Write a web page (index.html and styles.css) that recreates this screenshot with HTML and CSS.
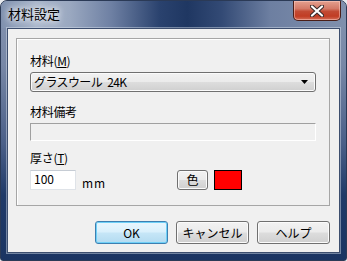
FILE: index.html
```html
<!DOCTYPE html>
<html lang="ja">
<head>
    <meta charset="UTF-8">
    <title>材料設定</title>
    <link rel="stylesheet" href="styles.css">
</head>
<body>
    <div class="window">
        <div class="titlebar">
            <span class="title">材料設定</span>
            <button class="close-btn">
                <svg width="14" height="12" viewBox="0 0 14 12">
                    <path d="M2 1.5 L12 10.5 M12 1.5 L2 10.5" stroke="#3a2a2a" stroke-width="4.2" stroke-linecap="round"/>
                    <path d="M2 1.5 L12 10.5 M12 1.5 L2 10.5" stroke="#ffffff" stroke-width="2.2" stroke-linecap="round"/>
                </svg>
            </button>
        </div>
        <div class="client">
            <div class="group">
                <div class="label">材料(<u>M</u>)</div>
                <div class="combo">
                    <span class="combo-text">グラスウール 24K</span>
                    <svg class="combo-arrow" width="8" height="5" viewBox="0 0 8 5">
                        <path d="M0 0 H7 L3.5 4 Z" fill="#000"/>
                    </svg>
                </div>
                <div class="label gap-l">材料備考</div>
                <div class="memo"></div>
                <div class="label gap-t">厚さ(<u>T</u>)</div>
                <div class="thick-row">
                    <div class="edit">100</div>
                    <span class="unit">mm</span>
                    <button class="btn color-btn">色</button>
                    <div class="swatch"></div>
                </div>
            </div>
            <div class="actions">
                <button class="btn btn-default">OK</button>
                <button class="btn">キャンセル</button>
                <button class="btn">ヘルプ</button>
            </div>
        </div>
    </div>
</body>
</html>
```

FILE: styles.css
```css
body {
    margin: 0;
    padding: 0;
    background: #e8eaee;
    font-family: "Noto Sans CJK JP", "Liberation Sans", sans-serif;
    font-size: 12px;
    color: #000;
}

.window {
    width: 347px;
    height: 261px;
    box-sizing: border-box;
    border: 1px solid #2b3a56;
    border-radius: 7px 7px 3px 3px;
    background: linear-gradient(to bottom, #8594b0 0%, #7787a6 25%, #4a5f88 55%, #203a68 75%, #1b3462 100%);
    display: flex;
    flex-direction: column;
    overflow: hidden;
}

.titlebar {
    height: 27px;
    display: flex;
    align-items: flex-start;
    padding-left: 7px;
    padding-right: 5px;
    background: linear-gradient(90deg, #7f90ae 0%, #a9b6cb 10%, #9aa8c0 20%, #6e80a3 32%, #2a426e 46%, #1f3762 54%, #334a75 64%, #6d7fa1 78%, #8090ad 100%);
}

.title {
    margin-top: 5px;
    font-size: 13px;
    line-height: 16px;
    color: #000;
    text-shadow: 0 0 6px #fff, 0 0 10px rgba(255, 255, 255, 0.8);
}

.close-btn {
    margin-left: auto;
    width: 48px;
    height: 20px;
    padding: 0;
    border: 1px solid #4a1e18;
    border-top: none;
    border-radius: 0 0 5px 5px;
    background: linear-gradient(to bottom, #e4a08f 0%, #d47a68 40%, #c24a33 55%, #c13d24 80%, #d4705a 100%);
    box-shadow: inset 0 0 0 1px rgba(255, 210, 200, 0.5);
    display: flex;
    align-items: center;
    justify-content: center;
}

.client {
    margin: 0 6px 7px 6px;
    flex: 1;
    border: 1px solid #3d4e6e;
    background: #f0f0f0;
    padding: 9px 9px 0 8px;
    box-shadow: 0 0 0 1px rgba(220, 228, 240, 0.45);
}

.group {
    height: 168px;
    box-sizing: border-box;
    border: 1px solid #a6a6a6;
    box-shadow: inset 1px 1px 0 #ffffff;
    padding: 15px 13px 0 13px;
}

.label {
    line-height: 14px;
    height: 14px;
    letter-spacing: -0.3px;
}

.label u {
    text-underline-offset: 1px;
}

.gap-l {
    margin-top: 13px;
}

.gap-t {
    margin-top: 10px;
}

.combo {
    margin-top: 4px;
    height: 20px;
    box-sizing: border-box;
    border: 1px solid #707070;
    border-radius: 3px;
    background: linear-gradient(to bottom, #f2f2f2 0%, #ebebeb 48%, #dddddd 52%, #cfcfcf 100%);
    box-shadow: inset 0 0 0 1px #fbfbfb;
    display: flex;
    align-items: center;
    padding: 0 3px 0 3px;
}

.combo-text {
    line-height: 14px;
    letter-spacing: -0.6px;
    word-spacing: 3px;
}

.combo-arrow {
    margin-left: auto;
    margin-right: 3px;
}

.memo {
    margin-top: 4px;
    height: 18px;
    box-sizing: border-box;
    border-top: 1px solid #a0a0a0;
    border-left: 1px solid #a0a0a0;
    border-right: 1px solid #ffffff;
    border-bottom: 1px solid #ffffff;
}

.thick-row {
    margin-top: 5px;
    height: 20px;
    display: flex;
    align-items: stretch;
}

.edit {
    width: 46px;
    box-sizing: border-box;
    border: 1px solid #dfe3e8;
    border-top-color: #c6ccd4;
    background: #fff;
    padding: 1px 3px;
    line-height: 14px;
}

.unit {
    align-self: flex-end;
    line-height: 14px;
    width: 101px;
    box-sizing: border-box;
    padding-left: 6px;
    letter-spacing: 1px;
}

.btn {
    font-family: "Noto Sans CJK JP", "Liberation Sans", sans-serif;
    font-size: 12px;
    line-height: 14px;
    color: #000;
    width: 73px;
    height: 23px;
    padding: 0;
    border: 1px solid #707070;
    border-radius: 3px;
    background: linear-gradient(to bottom, #f2f2f2 0%, #ebebeb 48%, #dddddd 52%, #cfcfcf 100%);
    box-shadow: inset 0 0 0 1px #fbfbfb;
}

.color-btn {
    width: 31px;
    height: 20px;
}

.swatch {
    margin-left: 6px;
    width: 28px;
    box-sizing: border-box;
    border: 1px solid #000;
    background: #ff0000;
}

.btn-default {
    border-color: #3c7fb1;
    background: linear-gradient(to bottom, #eaf6fd 0%, #d9f0fc 48%, #c6e6f7 52%, #b3dbf1 100%);
    box-shadow: inset 0 0 0 1px #6fd0f7;
}

.actions {
    margin-top: 15px;
    display: flex;
    justify-content: flex-end;
    gap: 8px;
}
```
